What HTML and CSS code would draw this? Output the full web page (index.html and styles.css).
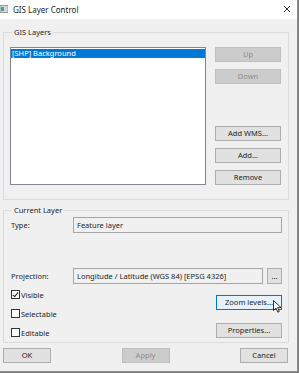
FILE: index.html
```html
<!DOCTYPE html>
<html lang="en">

<head>
    <meta charset="UTF-8">
    <meta name="viewport" content="width=device-width, initial-scale=1.0">
    <title>GIS Layer Control</title>
    <link rel="stylesheet" href="styles.css">
</head>

<body>
    <div class="window">
        <div class="titlebar">
            <svg class="app-icon" width="8" height="8" viewBox="0 0 8 8">
                <rect x="0" y="0.5" width="8" height="7" fill="#d8d8d8" stroke="#9a9a9a" stroke-width="1"/>
                <rect x="1" y="2" width="3" height="4" fill="#3aa6a0"/>
            </svg>
            <span class="title">GIS Layer Control</span>
            <svg class="close" width="8" height="8" viewBox="0 0 8 8">
                <path d="M1 1 L7 7 M7 1 L1 7" stroke="#222" stroke-width="0.9" fill="none"/>
            </svg>
        </div>

        <div class="content">
            <fieldset class="group group-layers">
                <legend>GIS Layers</legend>
                <div class="layers-grid">
                    <div class="listbox">
                        <div class="list-item selected">[SHP] Background</div>
                    </div>
                    <div class="button-col">
                        <button class="btn" disabled>Up</button>
                        <button class="btn" disabled>Down</button>
                        <button class="btn push-down">Add WMS...</button>
                        <button class="btn">Add...</button>
                        <button class="btn">Remove</button>
                    </div>
                </div>
            </fieldset>

            <fieldset class="group group-current">
                <legend>Current Layer</legend>
                <div class="field-row">
                    <span class="field-label">Type:</span>
                    <div class="textbox">Feature layer</div>
                </div>
                <div class="field-row projection-row">
                    <span class="field-label">Projection:</span>
                    <div class="textbox">Longitude / Latitude (WGS 84) [EPSG 4326]</div>
                    <button class="btn btn-small">...</button>
                </div>
                <div class="options">
                    <div class="checks">
                        <label class="check"><span class="box checked"></span>Visible</label>
                        <label class="check"><span class="box"></span>Selectable</label>
                        <label class="check"><span class="box"></span>Editable</label>
                    </div>
                    <div class="option-buttons">
                        <button class="btn focused">Zoom levels...
                            <svg class="cursor" width="9" height="13" viewBox="0 0 9 13">
                                <path d="M0.5 0.5 L0.5 10.5 L3 8.2 L4.8 12.2 L6.3 11.5 L4.6 7.6 L8 7.6 Z" fill="#fff" stroke="#000" stroke-width="0.8" stroke-linejoin="round"/>
                            </svg>
                        </button>
                        <button class="btn">Properties...</button>
                    </div>
                </div>
            </fieldset>

            <div class="footer">
                <button class="btn btn-footer">OK</button>
                <button class="btn btn-footer" disabled>Apply</button>
                <button class="btn btn-footer">Cancel</button>
            </div>
        </div>
    </div>
</body>

</html>
```

FILE: styles.css
```css
body {
    margin: 0;
    padding: 0;
    background-color: #7b7b7b;
    font-family: "Segoe UI", "Noto Sans", sans-serif;
    font-size: 7.5px;
    color: #1e1e1e;
}

.window {
    width: 297px;
    height: 371px;
    background-color: #f0f0f0;
    border-right: 1px solid #8c8c8c;
    border-bottom: 1px solid #8c8c8c;
    overflow: hidden;
}

.titlebar {
    height: 19px;
    background: white;
    display: flex;
    align-items: center;
}

.app-icon {
    margin: 0 5px 1px 0;
}

.title {
    font-size: 8px;
    flex: 1;
}

.close {
    margin: 0 6px 1px 0;
}

.group {
    margin: 0 0 0 3px;
    width: 286px;
    box-sizing: border-box;
    border: 1px solid #dcdcdc;
    padding: 0 6px;
    min-width: 0;
}

.group legend {
    padding: 0 2px;
    margin-left: 2px;
    line-height: 10px;
    height: 10px;
}

.group-layers {
    margin-top: 8px;
    padding-top: 10px;
    padding-bottom: 14px;
}

.layers-grid {
    display: grid;
    grid-template-columns: 196px 66px;
    gap: 9px;
}

.listbox {
    height: 138px;
    box-sizing: border-box;
    background: white;
    border: 1px solid #828790;
    padding: 1px 0 0 0;
}

.list-item {
    height: 9px;
    line-height: 9px;
    padding-left: 1px;
    white-space: nowrap;
}

.list-item.selected {
    background: #0078d7;
    color: white;
}

.button-col {
    display: flex;
    flex-direction: column;
    gap: 7px;
}

.push-down {
    margin-top: auto;
}

.btn {
    height: 15px;
    box-sizing: border-box;
    background: #e1e1e1;
    border: 1px solid #adadad;
    font-family: inherit;
    font-size: 7.5px;
    color: #1e1e1e;
    padding: 0;
    line-height: 13px;
}

.btn:disabled {
    background: #cccccc;
    border-color: #bfbfbf;
    color: #8d8d8d;
}

.btn.focused {
    position: relative;
    background: #e5f1fb;
    border-color: #0078d7;
}

.cursor {
    position: absolute;
    left: 56px;
    top: 4px;
}

.group-current {
    margin-top: 5px;
    padding-top: 2px;
    padding-bottom: 3px;
}

.field-row {
    display: grid;
    grid-template-columns: 63px 1fr;
    align-items: center;
}

.field-label {
    padding-left: 1px;
    white-space: nowrap;
}

.textbox {
    height: 16px;
    box-sizing: border-box;
    border: 1px solid #a5a5a5;
    background: #f0f0f0;
    line-height: 14px;
    padding-left: 3px;
    white-space: nowrap;
    overflow: hidden;
}

.projection-row {
    margin-top: 35px;
    grid-template-columns: 59px 190px 15px;
    gap: 0 4px;
}

.btn-small {
    height: 16px;
    line-height: 12px;
}

.options {
    display: grid;
    grid-template-columns: 1fr 66px;
    margin-top: 4px;
}

.checks {
    display: flex;
    flex-direction: column;
    gap: 6px;
}

.check {
    display: flex;
    align-items: center;
    height: 13px;
}

.box {
    width: 9px;
    height: 9px;
    box-sizing: border-box;
    border: 1px solid #333;
    background: white;
    margin: 0 1px 0 1px;
    position: relative;
}

.box.checked::after {
    content: "";
    position: absolute;
    left: 2px;
    top: 0;
    width: 2px;
    height: 5px;
    border-right: 1px solid #222;
    border-bottom: 1px solid #222;
    transform: rotate(40deg);
}

.option-buttons {
    display: flex;
    flex-direction: column;
    gap: 13px;
    padding-top: 7px;
}

.footer {
    display: flex;
    justify-content: space-between;
    width: 285px;
    margin: 5px 0 0 3px;
}

.btn-footer {
    width: 48px;
}
```
